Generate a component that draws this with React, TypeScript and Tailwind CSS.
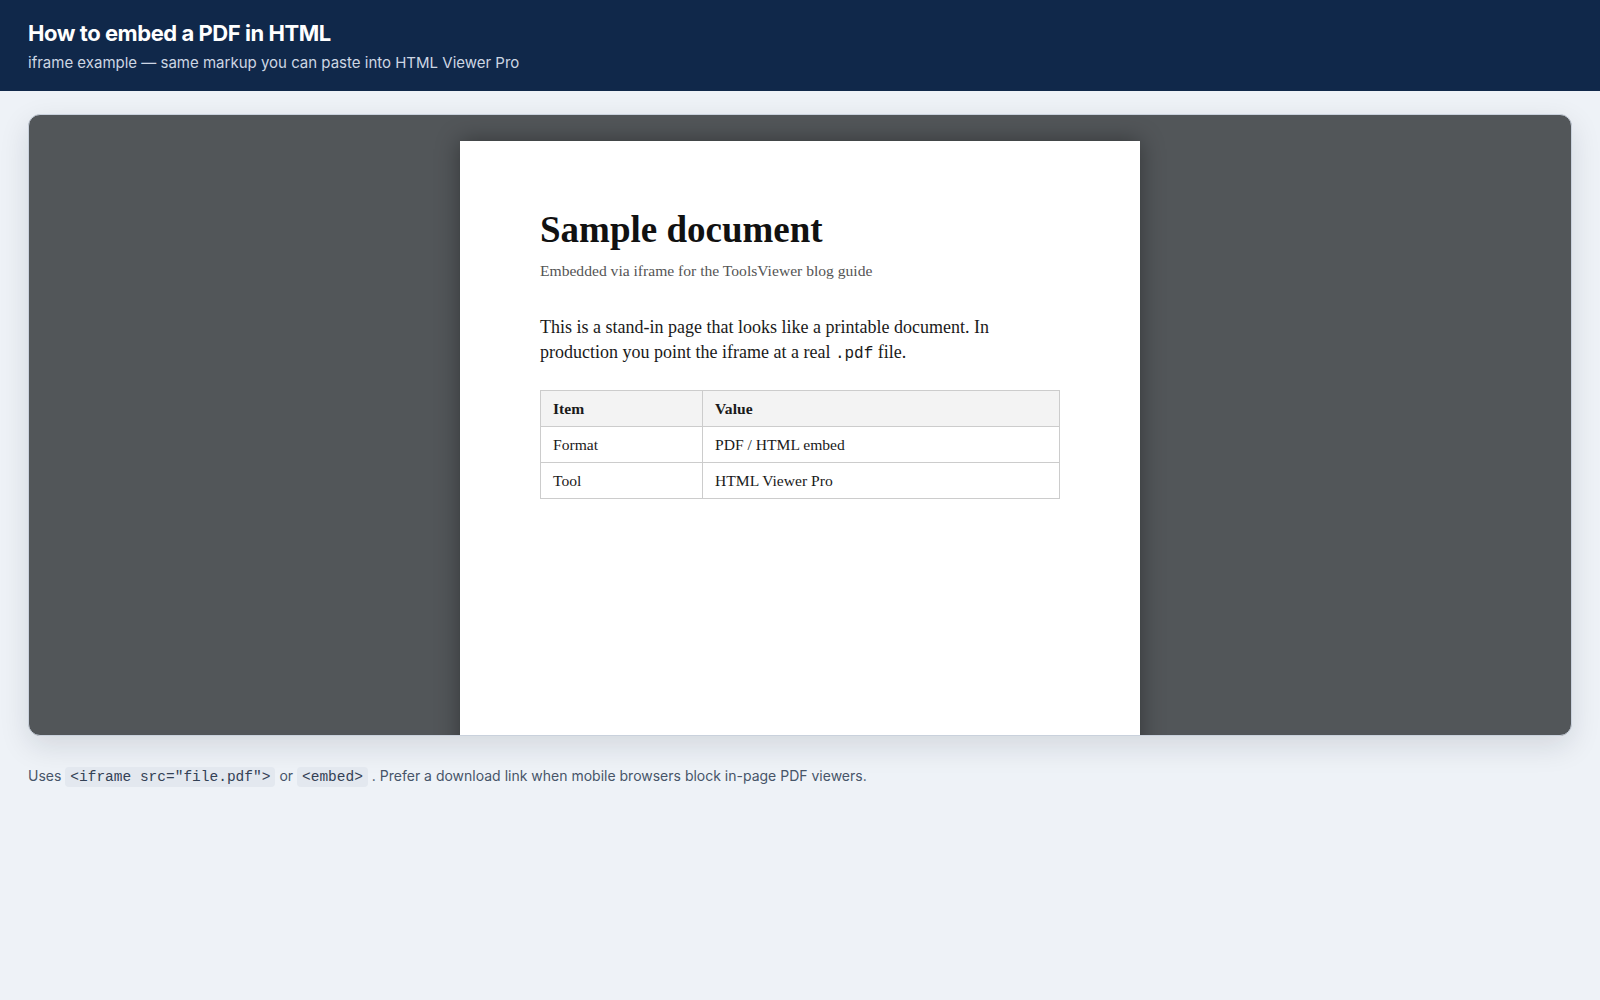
import React from 'react';

const ROWS = [
  { item: 'Format', value: 'PDF / HTML embed' },
  { item: 'Tool', value: 'HTML Viewer Pro' },
];

const App: React.FC = () => {
  return (
    <div className="min-h-screen bg-[#eef2f7] font-['Inter','Liberation_Sans',sans-serif]">
      {/* Header */}
      <header className="bg-[#10284a] px-[28px] pt-[19px] pb-[18px]">
        <h1 className="text-[22px] leading-[28px] font-bold tracking-[-0.45px] text-white">How to embed a PDF in HTML</h1>
        <p className="mt-[6px] text-[15px] leading-[20px] text-[#cdd6e3]">
          iframe example — same markup you can paste into HTML Viewer Pro
        </p>
      </header>

      <main className="px-[28px] pt-[23px]">
        {/* Embedded viewer */}
        <div className="h-[622px] overflow-hidden rounded-xl border border-[#c9d1dc] bg-[#525659] shadow-[0_10px_30px_rgba(15,23,42,0.12)]">
          <div className="mx-auto mt-[26px] h-[620px] w-[680px] bg-white px-[80px] pt-[69px] shadow-[0_0_22px_rgba(0,0,0,0.38)] font-['Liberation_Serif',serif] text-[#1a1a1a]">
            <h2 className="text-[37px] leading-[40px] font-bold text-[#111]">Sample document</h2>
            <p className="mt-[11px] text-[15.6px] leading-[20px] text-[#555]">
              Embedded via iframe for the ToolsViewer blog guide
            </p>
            <p className="mt-[34px] text-[18px] leading-[25px] text-[#1a1a1a]">
              This is a stand-in page that looks like a printable document. In
              <br />
              production you point the iframe at a real{' '}
              <code className="font-['Liberation_Mono',monospace] text-[16px]">.pdf</code> file.
            </p>
            <table className="mt-[23px] w-full border-collapse text-[15.6px] leading-[19px] text-[#1a1a1a]">
              <thead>
                <tr className="bg-[#f3f3f3]">
                  <th className="w-[162px] border border-[#cccccc] px-3 py-2 text-left font-bold">Item</th>
                  <th className="border border-[#cccccc] px-3 py-2 text-left font-bold">Value</th>
                </tr>
              </thead>
              <tbody>
                {ROWS.map((r) => (
                  <tr key={r.item}>
                    <td className="border border-[#cccccc] px-3 py-2">{r.item}</td>
                    <td className="border border-[#cccccc] px-3 py-2">{r.value}</td>
                  </tr>
                ))}
              </tbody>
            </table>
          </div>
        </div>

        {/* Footnote */}
        <p className="mt-[30px] text-[14px] leading-[20px] text-[#475569]">
          Uses{' '}
          <code className="rounded bg-[#e3e8ef] px-[5px] py-[2px] font-['Liberation_Mono',monospace] text-[14.5px] text-[#334155]">
            {'<iframe src="file.pdf">'}
          </code>{' '}
          or{' '}
          <code className="rounded bg-[#e3e8ef] px-[5px] py-[2px] font-['Liberation_Mono',monospace] text-[14.5px] text-[#334155]">
            {'<embed>'}
          </code>{' '}
          . Prefer a download link when mobile browsers block in-page PDF viewers.
        </p>
      </main>
    </div>
  );
};

export default App;
